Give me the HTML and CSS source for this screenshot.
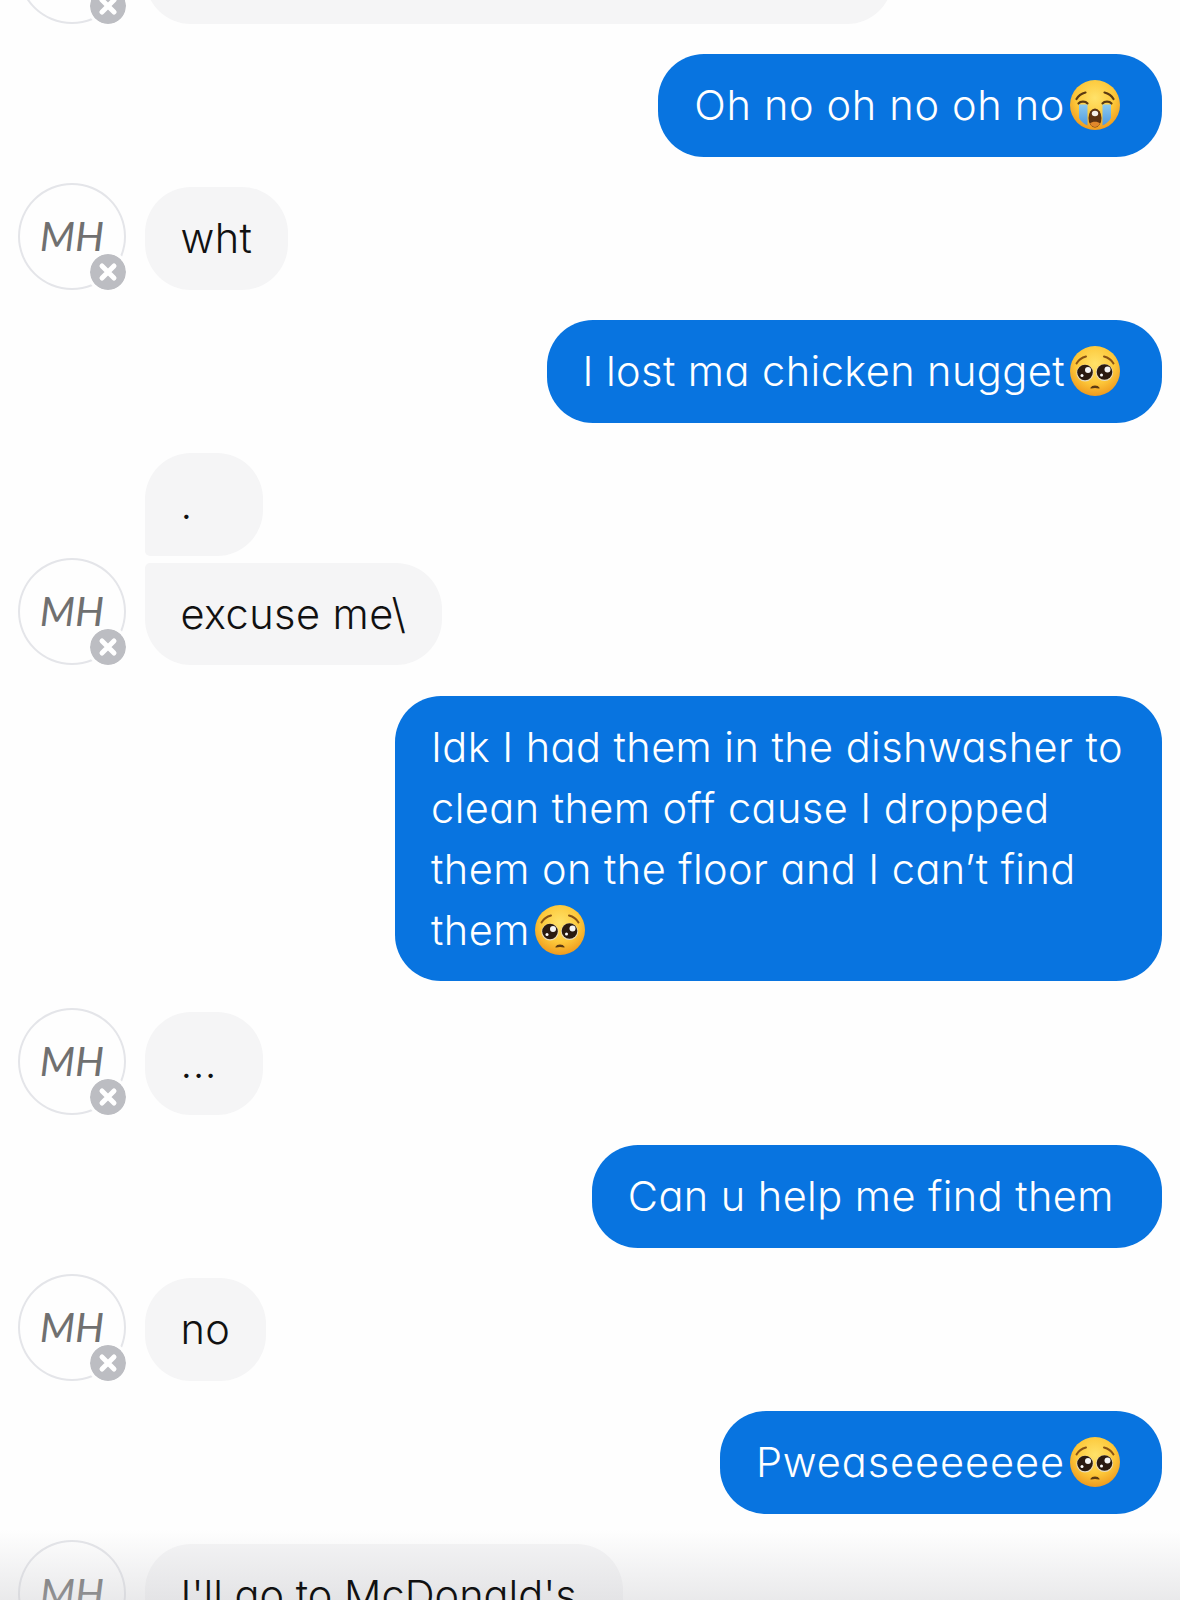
FILE: index.html
```html
<!DOCTYPE html>
<html lang="en">
<head>
<meta charset="utf-8">
<title>Chat</title>
<link rel="stylesheet" href="styles.css">
</head>
<body>
<svg class="defs" width="0" height="0" aria-hidden="true">
  <defs>
    <radialGradient id="face" cx="50%" cy="36%" r="64%">
      <stop offset="0" stop-color="#ffe26a"/>
      <stop offset="0.6" stop-color="#fdc83a"/>
      <stop offset="1" stop-color="#ef9a1e"/>
    </radialGradient>
    <linearGradient id="tear" x1="0" y1="0" x2="0" y2="1">
      <stop offset="0" stop-color="#8cc9ef"/>
      <stop offset="1" stop-color="#4f9ae0"/>
    </linearGradient>
    <symbol id="cry" viewBox="0 0 50 50">
      <circle cx="25" cy="25" r="25" fill="url(#face)"/>
      <path d="M6.500 19c2-3.500 5-5.500 9-6.500M43.500 19c-2-3.500-5-5.500-9-6.500" fill="none" stroke="#5b3a12" stroke-width="2.200" stroke-linecap="round"/>
      <path d="M8.500 23.500c2-2.500 7-2.500 9 0M32.500 23.500c2-2.500 7-2.500 9 0" fill="none" stroke="#5b3a12" stroke-width="2.200" stroke-linecap="round"/>
      <path d="M9 24.500h8.500v21c-3.500-1.500-6.500-4-8.500-7.500zM32.500 24.500h8.500v13.500c-2 3.500-5 6-8.500 7.500z" fill="url(#tear)"/>
      <ellipse cx="25" cy="38" rx="6.500" ry="9.500" fill="#5b3312"/>
      <ellipse cx="25" cy="33.500" rx="3.200" ry="2.800" fill="#f4f1ea"/>
      <path d="M20 43.500c2-2.500 8-2.500 10 0-1.500 2.600-3 3.500-5 3.500s-3.500-.9-5-3.500z" fill="#e0882c"/>
    </symbol>
    <symbol id="plead" viewBox="0 0 50 50">
      <circle cx="25" cy="25" r="25" fill="url(#face)"/>
      <path d="M6.500 17.500c2-3.500 5.500-6 9.500-7M43.500 17.500c-2-3.500-5.500-6-9.500-7" fill="none" stroke="#8a5414" stroke-width="2" stroke-linecap="round"/>
      <circle cx="15" cy="27" r="8.600" fill="#e9dcbc"/>
      <circle cx="34.500" cy="26.500" r="8.600" fill="#e9dcbc"/>
      <circle cx="15" cy="26.500" r="7.800" fill="#2a1a10"/>
      <circle cx="34.500" cy="26" r="7.800" fill="#2a1a10"/>
      <circle cx="18" cy="24" r="3" fill="#f4f4f4"/>
      <circle cx="37.500" cy="23.500" r="3" fill="#f4f4f4"/>
      <circle cx="12" cy="29.500" r="1.500" fill="#fff"/>
      <circle cx="31.500" cy="29" r="1.500" fill="#fff"/>
      <path d="M21 42c1.500-2.600 6.500-2.600 8 0-2.500-.9-5.500-.9-8 0z" fill="#5b3a12" stroke="#5b3a12" stroke-width="1.200" stroke-linejoin="round"/>
    </symbol>
    <symbol id="close" viewBox="0 0 36 36">
      <circle cx="18" cy="18" r="18" fill="#bcbdc2"/>
      <path d="M12 12l12 12M24 12l-12 12" stroke="#fff" stroke-width="5" stroke-linecap="round"/>
    </symbol>
  </defs>
</svg>

<main class="thread">
  <div class="row row-in">
    <div class="avatar"><span>MH</span><svg class="badge"><use href="#close"/></svg></div>
    <div class="stack"><div class="bubble in top-cut"></div></div>
  </div>

  <div class="row row-out">
    <div class="bubble out spaced">Oh no oh no oh no<svg class="emoji"><use href="#cry"/></svg></div>
  </div>

  <div class="row row-in">
    <div class="avatar"><span>MH</span><svg class="badge"><use href="#close"/></svg></div>
    <div class="stack"><div class="bubble in">wht</div></div>
  </div>

  <div class="row row-out">
    <div class="bubble out">I lost ma chicken nugget<svg class="emoji"><use href="#plead"/></svg></div>
  </div>

  <div class="row row-in">
    <div class="avatar"><span>MH</span><svg class="badge"><use href="#close"/></svg></div>
    <div class="stack">
      <div class="bubble in first dot">.</div>
      <div class="bubble in last">excuse me\</div>
    </div>
  </div>

  <div class="row row-out">
    <div class="bubble out long">Idk I had them in the dishwasher to<br>clean them off cause I dropped<br>them on the floor and I can’t find<br>them<svg class="emoji"><use href="#plead"/></svg></div>
  </div>

  <div class="row row-in">
    <div class="avatar"><span>MH</span><svg class="badge"><use href="#close"/></svg></div>
    <div class="stack"><div class="bubble in dots">...</div></div>
  </div>

  <div class="row row-out">
    <div class="bubble out plain">Can u help me find them</div>
  </div>

  <div class="row row-in">
    <div class="avatar"><span>MH</span><svg class="badge"><use href="#close"/></svg></div>
    <div class="stack"><div class="bubble in">no</div></div>
  </div>

  <div class="row row-out">
    <div class="bubble out wide">Pweaseeeeeee<svg class="emoji"><use href="#plead"/></svg></div>
  </div>

  <div class="row row-in">
    <div class="avatar"><span>MH</span><svg class="badge"><use href="#close"/></svg></div>
    <div class="stack"><div class="bubble in tight"><span class="over-fade">I'll go to McDonald's</span></div></div>
  </div>
</main>
<div class="fade"></div>
</body>
</html>
```
FILE: styles.css
```css
html, body {
  margin: 0;
  height: 1600px;
  overflow: hidden;
  background: #fefefe;
}
.defs { position: absolute; }
.thread {
  display: flex;
  flex-direction: column;
  gap: 30.6px;
  margin-top: -79px;
  padding: 0 18px;
  font-family: Inter, "Liberation Sans", sans-serif;
  font-feature-settings: "cv11" 1;
  font-weight: 350;
  font-size: 41.5px;
  letter-spacing: 0.43px;
  line-height: 61px;
}
.row { display: flex; align-items: flex-end; flex-shrink: 0; }
.row-out { justify-content: flex-end; }
.row-in { gap: 18.5px; }
.stack { display: flex; flex-direction: column; align-items: flex-start; gap: 7px; }
.bubble {
  padding: 20.75px 36px;
  border-radius: 46px;
  white-space: nowrap;
}
.in { background: #f5f5f6; color: #111; }
.out { background: #0874e0; color: #fff; }
.spaced { letter-spacing: 0.66px; }
.wide { letter-spacing: 0.93px; }
.tight { letter-spacing: 0; padding-right: 46px; }
.plain { padding-right: 48px; }
.long { padding-right: 39px; }
.first { border-bottom-left-radius: 5px; }
.last { border-top-left-radius: 5px; }
.dot, .dots { min-width: 46.5px; }
.top-cut { width: 676px; height: 61px; }
.over-fade { position: relative; z-index: 2; }
.emoji {
  display: inline-block;
  width: 50px;
  height: 50px;
  margin: 0 6px 0 5px;
  vertical-align: -10px;
}
.avatar {
  position: relative;
  box-sizing: border-box;
  width: 108px;
  height: 107px;
  margin-top: -5px;
  padding-bottom: 2px;
  border: 2px solid #e4e5e9;
  border-radius: 50%;
  display: flex;
  align-items: center;
  justify-content: center;
  flex-shrink: 0;
  font-family: Lato, "Liberation Sans", sans-serif;
  font-style: italic;
  font-weight: 400;
  font-size: 41px;
  line-height: 1;
  letter-spacing: 0;
  color: #707070;
}
.badge {
  position: absolute;
  right: -2px;
  bottom: -2px;
  width: 36px;
  height: 36px;
  border-radius: 50%;
  box-shadow: 0 0 0 3px #fefefe;
}
.fade {
  position: absolute;
  left: 0;
  right: 0;
  top: 1530px;
  height: 70px;
  background: linear-gradient(to bottom, rgba(220,220,222,0), rgba(200,200,204,.38));
}
```
